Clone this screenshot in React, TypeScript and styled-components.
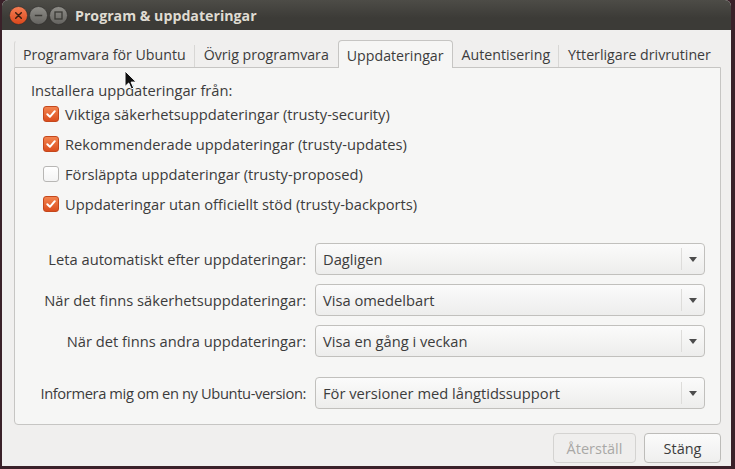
import * as React from "react";
import styled, { createGlobalStyle } from "styled-components";

const GlobalStyle = createGlobalStyle`
  html, body {
    margin: 0;
    padding: 0;
    background: #2f1d24;
  }
  body {
    font-family: "Open Sans", "Liberation Sans", sans-serif;
    -webkit-font-smoothing: antialiased;
  }
`;

const Frame = styled.div`
  width: 735px;
  height: 469px;
  box-sizing: border-box;
  padding: 0 4px 3px 2px;
  background: #3a2129;
  display: flex;
  position: relative;
`;

const Window = styled.div`
  flex: 1;
  display: flex;
  flex-direction: column;
  background: #f0efee;
  border-radius: 6px 6px 0 0;
  overflow: hidden;
`;

const TitleBar = styled.div`
  height: 30px;
  flex: none;
  display: flex;
  align-items: center;
  padding-left: 7px;
  background: linear-gradient(#4d4c47, #3c3b37 60%);
  color: #dfdbd2;
  font-size: 14.2px;
  font-weight: 700;
`;

const Controls = styled.div`
  display: flex;
  gap: 1px;
  margin-right: 7px;
`;

const Body = styled.div`
  flex: 1;
  display: flex;
  flex-direction: column;
  padding: 10px 10px 0 12px;
  color: #3c3c3c;
  font-size: 14.7px;
`;

const TabRow = styled.div`
  display: flex;
  height: 27px;
  position: relative;
  z-index: 1;
  font-size: 14.2px;
`;

const Tab = styled.div<{ $active?: boolean; $sep?: boolean; $first?: boolean }>`
  box-sizing: border-box;
  padding: 0 8px;
  display: flex;
  align-items: center;
  white-space: nowrap;
  height: ${(p) => (p.$active ? "28px" : "27px")};
  background: ${(p) => (p.$active ? "#f6f6f5" : "transparent")};
  border: 1px solid ${(p) => (p.$active ? "#c6c5c3" : "transparent")};
  border-left-color: ${(p) => (p.$active ? "#c6c5c3" : p.$first ? "#d8d7d5" : "transparent")};
  border-bottom: none;
  border-radius: 4px 4px 0 0;
  padding-top: 1px;
  position: relative;
  &::after {
    content: "";
    display: ${(p) => (p.$sep ? "block" : "none")};
    position: absolute;
    right: -1px;
    top: 4px;
    bottom: 0;
    width: 1px;
    background: #d8d7d5;
  }
`;

const Panel = styled.div`
  height: 358px;
  box-sizing: border-box;
  background: #f6f6f5;
  border: 1px solid #c6c5c3;
  border-radius: 0 0 4px 4px;
  padding: 12px 15px 0 16px;
  display: flex;
  flex-direction: column;
`;

const SectionTitle = styled.div`
  height: 20px;
  line-height: 20px;
`;

const CheckList = styled.div`
  display: flex;
  flex-direction: column;
  padding-left: 12px;
  margin-top: -1px;
`;

const CheckRow = styled.label`
  height: 30px;
  display: flex;
  align-items: center;
  gap: 6px;
`;

const Box = styled.span<{ $checked: boolean }>`
  width: 16px;
  height: 16px;
  box-sizing: border-box;
  border-radius: 3px;
  display: flex;
  align-items: center;
  justify-content: center;
  background: ${(p) =>
    p.$checked ? "linear-gradient(#f3844f, #db4d1e)" : "linear-gradient(#ffffff, #f4f4f4)"};
  border: 1px solid ${(p) => (p.$checked ? "#c4471c" : "#b8b7b5")};
`;

const Settings = styled.div`
  display: grid;
  grid-template-columns: minmax(0, 1fr) 390px;
  column-gap: 9px;
  row-gap: 9px;
  margin-top: 24px;
  align-items: center;
`;

const Label = styled.div<{ $spaced?: boolean }>`
  text-align: right;
  white-space: nowrap;
  margin-top: ${(p) => (p.$spaced ? "11px" : "0")};
  letter-spacing: ${(p) => (p.$spaced ? "-0.38px" : "0")};
`;

const Combo = styled.div<{ $spaced?: boolean }>`
  height: 32px;
  box-sizing: border-box;
  border: 1px solid #c1c0bd;
  border-radius: 4px;
  background: linear-gradient(#fbfbfb, #ededec);
  display: flex;
  align-items: center;
  margin-top: ${(p) => (p.$spaced ? "11px" : "0")};
`;

const ComboText = styled.span`
  flex: 1;
  padding-left: 7px;
`;

const ComboArrow = styled.span`
  width: 21px;
  height: 22px;
  border-left: 1px solid #dddcda;
  display: flex;
  align-items: center;
  justify-content: center;
  margin-right: 1px;
`;

const Footer = styled.div`
  display: flex;
  justify-content: flex-end;
  gap: 8px;
  margin-top: 8px;
`;

const Button = styled.button<{ $disabled?: boolean }>`
  height: 30px;
  box-sizing: border-box;
  font: inherit;
  font-size: 14.5px;
  border-radius: 4px;
  padding: 0;
  width: ${(p) => (p.$disabled ? "83px" : "77px")};
  color: ${(p) => (p.$disabled ? "#a9a8a6" : "#3c3c3c")};
  border: 1px solid ${(p) => (p.$disabled ? "#d4d3d1" : "#bdbcb9")};
  background: ${(p) => (p.$disabled ? "#efeeed" : "linear-gradient(#fbfbfb, #efefee)")};
`;

const Cursor = styled.svg`
  position: absolute;
  left: 124px;
  top: 70px;
`;

function WinButton({ kind }: { kind: "close" | "min" | "max" }) {
  const close = kind === "close";
  return (
    <svg width="19" height="19" viewBox="0 0 19 19">
      <defs>
        <linearGradient id={`g-${kind}`} x1="0" y1="0" x2="0" y2="1">
          <stop offset="0" stopColor={close ? "#f57f55" : "#8f8e89"} />
          <stop offset="1" stopColor={close ? "#d9471b" : "#64635f"} />
        </linearGradient>
      </defs>
      <circle cx="9.5" cy="9.5" r="9" fill={`url(#g-${kind})`} stroke="#2f2e2b" strokeWidth="0.6" />
      {close && (
        <path d="M6.7 6.7l5.6 5.6M12.3 6.7l-5.6 5.6" stroke="#3a1d10" strokeWidth="1.5" strokeLinecap="round" />
      )}
      {kind === "min" && <path d="M5.8 9.5h7.4" stroke="#3a3935" strokeWidth="1.6" />}
      {kind === "max" && <rect x="6" y="6" width="7" height="7" fill="none" stroke="#3a3935" strokeWidth="1.3" />}
    </svg>
  );
}

function Check({ checked, children }: { checked: boolean; children: React.ReactNode }) {
  return (
    <CheckRow>
      <Box $checked={checked}>
        {checked && (
          <svg width="12" height="12" viewBox="0 0 12 12">
            <path d="M2.3 6.2l2.6 2.6 4.9-5.6" fill="none" stroke="#fff" strokeWidth="2" strokeLinecap="round" strokeLinejoin="round" />
          </svg>
        )}
      </Box>
      {children}
    </CheckRow>
  );
}

function Select({ value, spaced }: { value: string; spaced?: boolean }) {
  return (
    <Combo $spaced={spaced}>
      <ComboText>{value}</ComboText>
      <ComboArrow>
        <svg width="8" height="5" viewBox="0 0 8 5">
          <path d="M0 0h8L4 5z" fill="#4c4c4c" />
        </svg>
      </ComboArrow>
    </Combo>
  );
}

const tabs = [
  "Programvara för Ubuntu",
  "Övrig programvara",
  "Uppdateringar",
  "Autentisering",
  "Ytterligare drivrutiner",
];

const sources: [string, boolean][] = [
  ["Viktiga säkerhetsuppdateringar (trusty-security)", true],
  ["Rekommenderade uppdateringar (trusty-updates)", true],
  ["Försläppta uppdateringar (trusty-proposed)", false],
  ["Uppdateringar utan officiellt stöd (trusty-backports)", true],
];

export default function App() {
  const active = 2;
  return (
    <Frame>
      <GlobalStyle />
      <Window>
        <TitleBar>
          <Controls>
            <WinButton kind="close" />
            <WinButton kind="min" />
            <WinButton kind="max" />
          </Controls>
          Program &amp; uppdateringar
        </TitleBar>
        <Body>
          <TabRow>
            {tabs.map((t, i) => (
              <Tab
                key={t}
                $first={i === 0}
                $active={i === active}
                $sep={i !== active && i + 1 !== active && i < tabs.length - 1}
              >
                {t}
              </Tab>
            ))}
          </TabRow>
          <Panel>
            <SectionTitle>Installera uppdateringar från:</SectionTitle>
            <CheckList>
              {sources.map(([label, on]) => (
                <Check key={label} checked={on}>
                  {label}
                </Check>
              ))}
            </CheckList>
            <Settings>
              <Label>Leta automatiskt efter uppdateringar:</Label>
              <Select value="Dagligen" />
              <Label>När det finns säkerhetsuppdateringar:</Label>
              <Select value="Visa omedelbart" />
              <Label>När det finns andra uppdateringar:</Label>
              <Select value="Visa en gång i veckan" />
              <Label $spaced>Informera mig om en ny Ubuntu-version:</Label>
              <Select value="För versioner med långtidssupport" spaced />
            </Settings>
          </Panel>
          <Footer>
            <Button $disabled>Återställ</Button>
            <Button>Stäng</Button>
          </Footer>
        </Body>
      </Window>
      <Cursor width="13" height="20" viewBox="0 0 13 20">
        <path d="M1 1v15.5l3.7-3.5 2.6 6 2.4-1-2.6-5.9h5.2z" fill="#111" stroke="#fff" strokeWidth="1" strokeLinejoin="round" />
      </Cursor>
    </Frame>
  );
}
